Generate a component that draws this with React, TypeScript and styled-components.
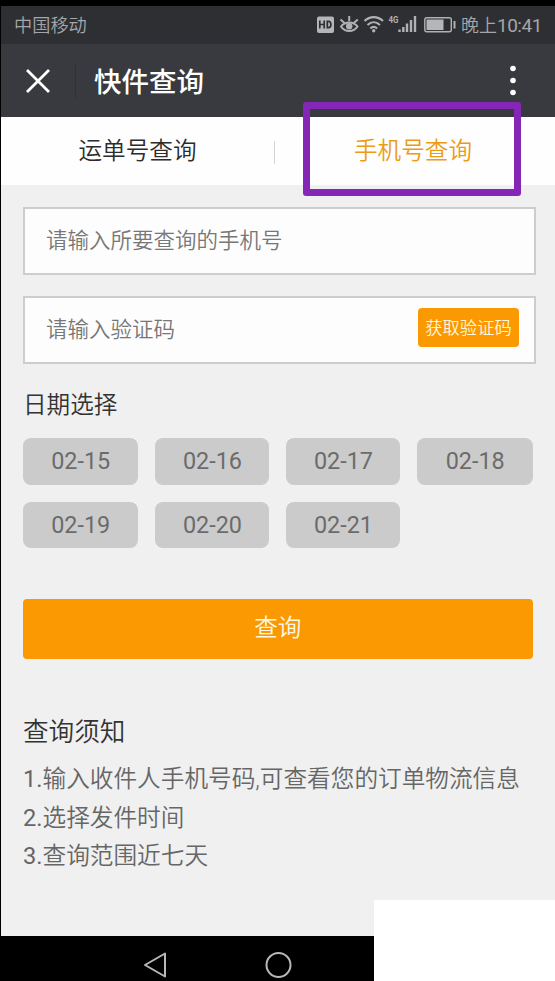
import React from 'react';
import styled, { createGlobalStyle } from 'styled-components';

const GlobalStyle = createGlobalStyle`
  * { box-sizing: border-box; }
  body { margin: 0; background: #000; }
  button, input { font-family: inherit; font-weight: inherit; }
`;

const Screen = styled.div`
  position: relative;
  display: flex;
  flex-direction: column;
  width: 555px;
  height: 981px;
  padding: 6px 0 0 1px;
  overflow: hidden;
  background: #000;
  font-family: Roboto, 'Noto Sans CJK SC', sans-serif;
  font-weight: 350;
`;

const StatusBar = styled.div`
  display: flex;
  align-items: center;
  justify-content: space-between;
  height: 38px;
  flex: none;
  padding: 0 12px 0 13px;
  background: #2e2f33;
  color: #a5a6a8;
  font-size: 18.2px;
  line-height: 38px;
`;

const Carrier = styled.span`
  padding-top: 2px;
`;

const StatusIcons = styled.div`
  display: flex;
  align-items: center;
`;

const StatusDrawing = styled.svg`
  display: block;
  width: 145px;
  height: 38px;
`;

const Clock = styled.span`
  display: flex;
  width: 82px;
  padding-top: 2px;
  font-size: 18px;
  white-space: nowrap;
`;

const ClockDigits = styled.span`
  font-size: 19px;
  font-weight: 400;
  letter-spacing: -0.5px;
`;

const Header = styled.header`
  display: flex;
  align-items: center;
  height: 73px;
  flex: none;
  padding: 0 31px 0 24px;
  background: #393a3f;
  color: #fff;
`;

const IconButton = styled.button<{ $width: number }>`
  display: flex;
  padding: 0;
  border: 0;
  background: none;
  color: inherit;
  width: ${({ $width }) => $width}px;
`;

const HeaderRule = styled.span`
  width: 1px;
  height: 34px;
  margin: 0 18px 0 24px;
  background: #303136;
`;

const Title = styled.h1`
  flex: 1;
  margin: 0;
  padding-top: 4px;
  font-size: 27.5px;
  font-weight: 500;
  line-height: 69px;
`;

const Tabs = styled.nav`
  display: flex;
  align-items: center;
  height: 68px;
  flex: none;
  background: #fefefe;
`;

const Tab = styled.button<{ $active?: boolean }>`
  width: ${({ $active }) => ($active ? 276 : 273)}px;
  padding: 0;
  border: 0;
  background: none;
  color: ${({ $active }) => ($active ? '#eb9c14' : '#2c2c2c')};
  font-size: 23.6px;
  line-height: 66px;
`;

const TabRule = styled.span`
  width: 1px;
  height: 23px;
  margin-top: 2px;
  background: #d4d4d4;
`;

const Content = styled.main`
  display: flex;
  flex-direction: column;
  height: 751px;
  flex: none;
  padding: 22px 22px 0 21.5px;
  background: #f0f0f0;
`;

const Field = styled.div`
  display: flex;
  align-items: center;
  width: 513.5px;
  height: 67.5px;
  flex: none;
  margin-bottom: 21.5px;
  padding: 0 15px 0 21.5px;
  border: 2px solid #cdcdcf;
  background: #fdfdfd;
`;

const TextInput = styled.input`
  flex: 1;
  min-width: 0;
  height: 60px;
  padding: 0 0 1px;
  border: 0;
  outline: 0;
  background: transparent;
  font-size: 21.5px;
  &::placeholder { color: #777; opacity: 1; }
`;

const CodeButton = styled.button`
  width: 101px;
  height: 39px;
  padding: 2px 0 0;
  border: 0;
  border-radius: 4px;
  background: #fb9902;
  color: #fff6dc;
  font-size: 17.3px;
  line-height: 37px;
  margin-bottom: 4px;
  white-space: nowrap;
`;

const SectionTitle = styled.h2<{ $size: number }>`
  margin: 0;
  padding: 1px 0 0 0.5px;
  color: #333;
  font-size: ${({ $size }) => $size}px;
  font-weight: inherit;
  line-height: 38px;
`;

const DateGrid = styled.div`
  display: grid;
  grid-template-columns: 115.5px 114px 114px 115.5px;
  gap: 17px;
  margin-top: 14px;
  width: 511px;
`;

const DateChip = styled.button`
  height: 46.5px;
  padding: 0 0 0 1px;
  border: 0;
  border-radius: 8px;
  background: #cbcbcb;
  color: #6b6b6b;
  font-size: 23.4px;
  font-weight: 400;
  line-height: 46px;
`;

const SubmitButton = styled.button`
  width: 510.5px;
  height: 60px;
  flex: none;
  margin: 51px 0 53px;
  padding: 0 0 1px;
  border: 0;
  border-radius: 4px;
  background: #fb9902;
  color: #fff8e6;
  font-size: 23.6px;
  line-height: 59px;
`;

const Rules = styled.ol`
  margin: 9px 0 0;
  padding: 0 0 0 0.5px;
  list-style: none;
  color: #666;
  font-size: 23.65px;
  line-height: 38.6px;
  white-space: nowrap;
`;

const RuleNumber = styled.span`
  font-weight: 400;
`;

const NavBar = styled.footer`
  display: flex;
  align-items: center;
  height: 45px;
  flex: none;
  padding: 12px 0 0 141px;
  gap: 95px;
  background: #000;
`;

const Highlight = styled.div`
  position: absolute;
  left: 303px;
  top: 102px;
  width: 218px;
  height: 94px;
  border: 7px solid #8427b6;
  border-radius: 3px;
`;

const CoverPatch = styled.div`
  position: absolute;
  left: 374px;
  top: 900px;
  width: 181px;
  height: 81px;
  background: #fff;
`;

const dates = ['02-15', '02-16', '02-17', '02-18', '02-19', '02-20', '02-21'];
const rules = ['输入收件人手机号码,可查看您的订单物流信息', '选择发件时间', '查询范围近七天'];

function StatusGlyphs() {
  return (
    <StatusDrawing viewBox="316 6 145 38" fill="none" stroke="#b0b1b3">
      <rect x="317" y="16.5" width="17" height="16.5" rx="2" fill="#b5b6b8" stroke="none" />
      <path d="M319.8 20.5v8M324.2 20.5v8M319.8 24.5h4.4M327.3 21.3v6.4h1.2c3.2 0 3.2-6.4 0-6.4z" stroke="#2e2f33" strokeWidth="1.7" />
      <path d="M341 26.5c4-5.5 12.5-5.5 16.5 0c-4 6-12.5 6-16.5 0zM340.5 19.5l4 3.5M349.2 16v5M357.8 19.5l-4 3.5" strokeWidth="2" />
      <circle cx="349.2" cy="26.2" r="3.2" fill="#b0b1b3" stroke="none" />
      <path d="M364.5 21c5.5-5.2 13-5.2 18.5 0M367.5 24.9c3.8-3.5 8.7-3.5 12.5 0M370.3 28.4c2-1.9 4.8-1.9 6.8 0" strokeWidth="2.1" />
      <circle cx="373.7" cy="30.8" r="1.7" fill="#b0b1b3" stroke="none" />
      <text x="388.5" y="23.2" fontFamily="Roboto, sans-serif" fontSize="9.5" fontWeight="700" textLength="10" lengthAdjust="spacingAndGlyphs" fill="#b0b1b3" stroke="none">4G</text>
      <path d="M399.5 32v-2.5M403.3 32v-5M407 32v-8.5M411 32v-12M415 32v-16" strokeWidth="2.4" />
      <rect x="424.8" y="17.7" width="26.5" height="14" rx="2" strokeWidth="1.4" />
      <rect x="426.5" y="19.5" width="17" height="10.5" fill="#b5b6b8" stroke="none" />
      <path d="M454.5 21v7.5" strokeWidth="2" />
    </StatusDrawing>
  );
}

export default function App() {
  return (
    <Screen>
      <GlobalStyle />
      <StatusBar>
        <Carrier>中国移动</Carrier>
        <StatusIcons>
          <StatusGlyphs />
          <Clock>晚上<ClockDigits>10:41</ClockDigits></Clock>
        </StatusIcons>
      </StatusBar>
      <Header>
        <IconButton $width={26} aria-label="关闭">
          <svg width="26" height="26" viewBox="0 0 26 26" stroke="#fff" strokeWidth="2.8">
            <path d="M2 2l22 22M24 2L2 24" />
          </svg>
        </IconButton>
        <HeaderRule />
        <Title>快件查询</Title>
        <IconButton $width={22} aria-label="更多">
          <svg width="22" height="34" viewBox="0 0 22 34" fill="#fff">
            <circle cx="11" cy="4.5" r="2.8" />
            <circle cx="11" cy="16.5" r="2.8" />
            <circle cx="11" cy="28.5" r="2.8" />
          </svg>
        </IconButton>
      </Header>
      <Tabs>
        <Tab>运单号查询</Tab>
        <TabRule />
        <Tab $active>手机号查询</Tab>
      </Tabs>
      <Content>
        <Field>
          <TextInput placeholder="请输入所要查询的手机号" />
        </Field>
        <Field>
          <TextInput placeholder="请输入验证码" />
          <CodeButton>获取验证码</CodeButton>
        </Field>
        <SectionTitle $size={23.6}>日期选择</SectionTitle>
        <DateGrid>
          {dates.map((date) => <DateChip key={date}>{date}</DateChip>)}
        </DateGrid>
        <SubmitButton>查询</SubmitButton>
        <SectionTitle $size={25.6}>查询须知</SectionTitle>
        <Rules>
          {rules.map((rule, index) => (
            <li key={rule}><RuleNumber>{index + 1}.</RuleNumber>{rule}</li>
          ))}
        </Rules>
      </Content>
      <NavBar>
        <svg width="28" height="30" viewBox="0 0 28 30" fill="none" stroke="#b8b8b8" strokeWidth="2" strokeLinejoin="round">
          <path d="M3 15L23 3.5v23z" />
        </svg>
        <svg width="28" height="30" viewBox="0 0 28 30" fill="none" stroke="#b8b8b8" strokeWidth="2">
          <circle cx="13.5" cy="15" r="12" />
        </svg>
      </NavBar>
      <Highlight />
      <CoverPatch />
    </Screen>
  );
}
